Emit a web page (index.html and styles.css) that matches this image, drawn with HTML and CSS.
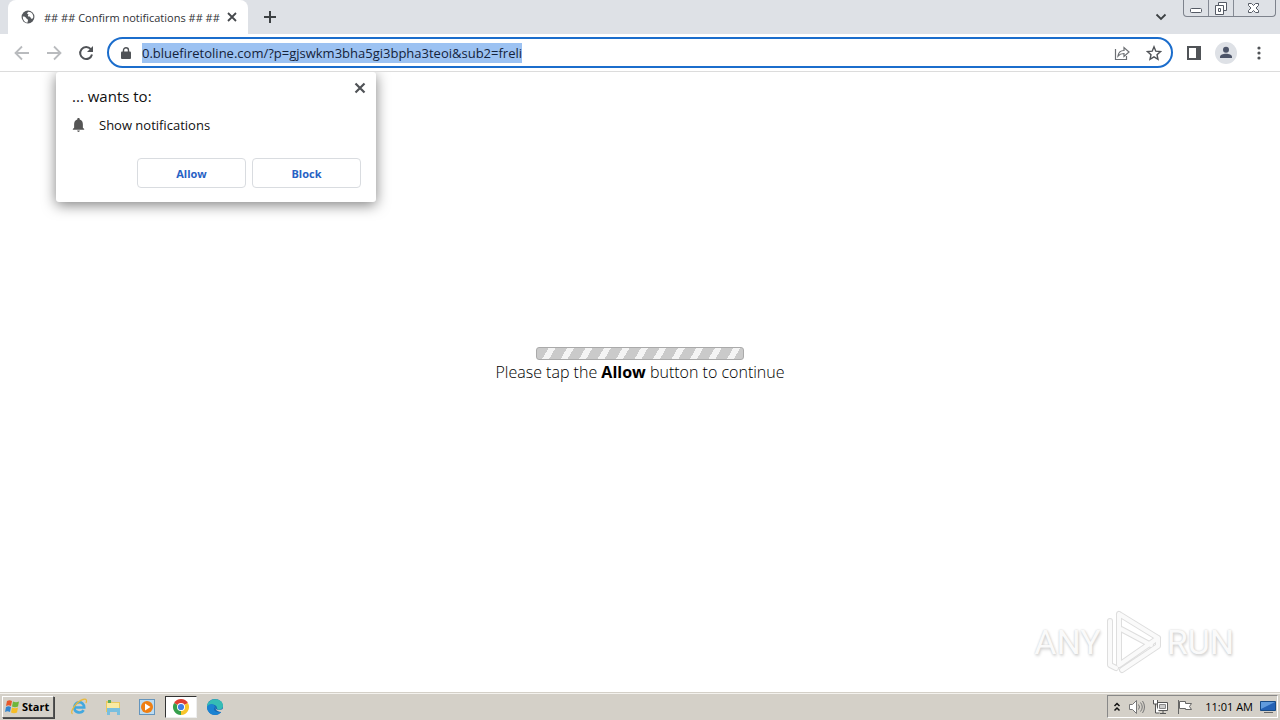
FILE: index.html
```html
<!DOCTYPE html>
<html lang="en">
<head>
<meta charset="utf-8">
<title>Confirm notifications</title>
<link rel="stylesheet" href="styles.css">
</head>
<body>
<header class="tabstrip">
  <div class="tab">
    <svg class="favicon" viewBox="0 0 24 24"><circle cx="12" cy="12" r="11" fill="#55585c"/><path d="M3 11c4 0 5 1 6 3s3 1 3 3-1 3-1 5C6 21 3 17 3 11zM13 3c-3 2-3 4-1 4s-2 4 1 4 3 1 4 3 3 1 4-1C22 8 18 3 13 3z" fill="#fff"/></svg>
    <span class="tab-title">## ## Confirm notifications ## ##</span>
    <button class="bare tab-close" aria-label="Close tab"><svg width="10" height="10" viewBox="0 0 10 10"><path d="M1 1l8 8M9 1L1 9" stroke="#45484c" stroke-width="1.8"/></svg></button>
  </div>
  <button class="bare new-tab" aria-label="New tab"><svg width="14" height="14" viewBox="0 0 14 14"><path d="M7 1v12M1 7h12" stroke="#3c4043" stroke-width="2"/></svg></button>
  <button class="bare tab-search" aria-label="Search tabs"><svg width="12" height="8" viewBox="0 0 12 8"><path d="M1.500 1.500L6 6l4.500-4.500" fill="none" stroke="#3c4043" stroke-width="1.800"/></svg></button>
  <div class="window-controls">
    <button class="bare" aria-label="Minimize"><svg width="24" height="16" viewBox="0 0 24 16"><rect x="6.500" y="8.500" width="11" height="4" rx="1" fill="#fff" stroke="#555a65"/></svg></button>
    <button class="bare" aria-label="Restore"><svg width="24" height="16" viewBox="0 0 24 16"><path d="M9.500 2.500h8v8h-8z" fill="#fff" stroke="#555a65"/><path d="M6.500 5.500h8v9h-8z" fill="#fff" stroke="#555a65"/><path d="M9.500 8.500h2v3h-2z" fill="none" stroke="#555a65"/></svg></button>
    <button class="bare close" aria-label="Close"><svg width="41" height="16" viewBox="0 0 41 16"><path d="M14.500 3.500h3l2 2 2-2h3v2L22 8l2.500 2.500v2h-3l-2-2-2 2h-3v-2L17 8l-2.500-2.500z" fill="#fff" stroke="#555a65"/></svg></button>
  </div>
</header>

<nav class="toolbar" aria-label="Browser toolbar">
  <div class="nav-buttons">
    <button class="bare" aria-label="Back"><svg width="16" height="16" viewBox="0 0 16 16"><path d="M15 8H2M8 1.500L1.500 8 8 14.500" fill="none" stroke="#b9bbbe" stroke-width="1.800"/></svg></button>
    <button class="bare" aria-label="Forward"><svg width="16" height="16" viewBox="0 0 16 16"><path d="M1 8h13M8 1.500L14.500 8 8 14.500" fill="none" stroke="#b9bbbe" stroke-width="1.800"/></svg></button>
    <button class="bare" aria-label="Reload"><svg width="16" height="16" viewBox="0 0 16 16"><path d="M12.800 4.200A6 6 0 1 0 14 9.500" fill="none" stroke="#505357" stroke-width="2"/><path d="M15 1v6H9z" fill="#505357"/></svg></button>
  </div>
  <div class="omnibox">
    <svg width="10" height="12" viewBox="0 0 10 12"><path d="M2.500 5V3.200a2.500 2.500 0 0 1 5 0V5" fill="none" stroke="#505357" stroke-width="1.400"/><rect y="4.500" width="10" height="7.500" rx="1" fill="#505357"/></svg>
    <input class="url" type="text" aria-label="Address" value="0.bluefiretoline.com/?p=gjswkm3bha5gi3bpha3teoi&amp;sub2=freli">
    <button class="bare share" aria-label="Share"><svg width="16" height="16" viewBox="0 0 16 16"><path d="M1.500 4v10.500h11V11M4 11c.5-4 2.500-5.500 6-5.500V2.500L15 7l-5 4.500v-3c-3 0-4.500.7-6 2.500z" fill="none" stroke="#6c6f73" stroke-width="1.200"/></svg></button>
    <button class="bare" aria-label="Bookmark"><svg width="16" height="16" viewBox="0 0 16 16"><path d="M8 1.800l1.800 4.400 4.700.4L11 9.700l1 4.600-4-2.500-4 2.500 1-4.600-3.500-3.100 4.700-.4z" fill="none" stroke="#505357" stroke-width="1.400"/></svg></button>
  </div>
  <div class="toolbar-end">
    <button class="bare" aria-label="Side panel"><svg width="14" height="14" viewBox="0 0 14 14"><rect x="1" y="1" width="12" height="12" fill="none" stroke="#505357" stroke-width="2"/><path d="M9 1h4v12H9z" fill="#505357"/></svg></button>
    <button class="bare" aria-label="Profile"><svg width="22" height="22" viewBox="0 0 22 22"><circle cx="11" cy="11" r="11" fill="#dee1e6"/><circle cx="11" cy="7.800" r="3" fill="#4c5468"/><path d="M5 16v-1c0-2 3-3.200 6-3.200s6 1.200 6 3.200v1z" fill="#4c5468"/></svg></button>
    <button class="bare" aria-label="Menu"><svg width="4" height="14" viewBox="0 0 4 14" fill="#505357"><circle cx="2" cy="2" r="1.600"/><circle cx="2" cy="7" r="1.600"/><circle cx="2" cy="12" r="1.600"/></svg></button>
  </div>
</nav>

<main class="page">
  <section class="prompt" role="dialog" aria-labelledby="prompt-title">
    <button class="bare prompt-close" aria-label="Dismiss"><svg width="12" height="12" viewBox="0 0 12 12"><path d="M1.500 1.500l9 9M10.500 1.500l-9 9" stroke="#505357" stroke-width="2.200"/></svg></button>
    <h1 class="prompt-title" id="prompt-title">... wants to:</h1>
    <p class="permission"><svg width="13" height="14" viewBox="0 0 14 16"><path d="M7 0c1 0 1.400.6 1.400 1.600C11 2.200 12 4.500 12 7v4l1.500 1.500v1H.5v-1L2 11V7c0-2.500 1-4.800 3.600-5.400C5.600.6 6 0 7 0zM5.500 14.300h3c0 1-.7 1.600-1.500 1.600s-1.500-.6-1.500-1.600z" fill="#555"/></svg>Show notifications</p>
    <div class="prompt-actions"><button class="action">Allow</button><button class="action">Block</button></div>
  </section>

  <div class="loading">
    <div class="stripes"></div>
    <p class="message">Please tap the <b>Allow</b> button to continue</p>
  </div>

  <div class="watermark">
    <span>ANY</span>
    <svg width="58" height="66" viewBox="0 0 58 66" fill="none" stroke-linejoin="round" stroke-linecap="round"><path d="M5 12v44l6 3M14 5v51M14 5l39 24-39 27M16 20l30 16M17 61l36-24V29" stroke="#dedede" stroke-width="6"/><path d="M5 12v44l6 3M14 5v51M14 5l39 24-39 27M16 20l30 16M17 61l36-24V29" stroke="#fafafa" stroke-width="4"/></svg>
    <span>RUN</span>
  </div>
</main>

<footer class="taskbar">
  <button class="start"><svg width="17" height="16" viewBox="0 0 17 16"><path d="M3 2c2-1 3-1 5 0L7 7C5 6 4 6 2 7z" fill="#e7582b"/><path d="M9 2.500c2 1 4 1 6 0l-1 5c-2 1-4 1-6 0z" fill="#6fb63c"/><path d="M2 8c2-1 3-1 5 0l-1 5c-2-1-3-1-5 0z" fill="#3285d0"/><path d="M8 8.500c2 1 4 1 6 0l-1 5c-2 1-4 1-6 0z" fill="#f6bd27"/></svg>Start</button>
  <div class="apps">
    <button class="bare app" aria-label="Internet Explorer"><svg width="18" height="18" viewBox="0 0 18 18" fill="none"><path d="M4.500 9.500h9.700C14 2 4 3 4.300 10c.2 5 7.200 6 9.300 2.200" stroke="#42a8df" stroke-width="2.600"/><path d="M2.500 16C-1 14 7 3 13 1.500c4-1 4 1 3 3.500" stroke="#e8b93d" stroke-width="1.300"/></svg></button>
    <button class="bare app" aria-label="File Explorer"><svg width="18" height="18" viewBox="0 0 18 18"><path d="M2 3h5l1 1h8v10H2z" fill="#e9c95f"/><path d="M3 5h12v8H3z" fill="#f9eaa3"/><path d="M4 2h3v3H4z" fill="#5cab5c"/><path d="M3 10h13v7h-3v-3H6v3H3z" fill="#79bfdf"/></svg></button>
    <button class="bare app" aria-label="Media Player"><svg width="18" height="18" viewBox="0 0 18 18"><rect x="1.500" y="1.500" width="15" height="15" fill="#bcdcf2" stroke="#6495bd"/><circle cx="9" cy="9" r="6" fill="#ef7f13"/><path d="M7 5.500v7L12.500 9z" fill="#fff"/></svg></button>
    <button class="bare app active" aria-label="Chrome"><svg width="18" height="18" viewBox="0 0 18 18"><path d="M9 9L2.070 5A8 8 0 0 1 15.930 5z" fill="#df3f32"/><path d="M9 9l6.930-4A8 8 0 0 1 9 17z" fill="#f8c52a"/><path d="M9 9v8A8 8 0 0 1 2.070 5z" fill="#369f4c"/><circle cx="9" cy="9" r="4" fill="#fff"/><circle cx="9" cy="9" r="3.100" fill="#3f7ee5"/></svg></button>
    <button class="bare app" aria-label="Edge"><svg width="18" height="18" viewBox="0 0 18 18"><circle cx="9" cy="9" r="8" fill="#1769b5"/><path d="M1 9C1-1 17-1 17 8c0 4-6 5-6 2 0-4-7-5-10-1z" fill="#35bcb5"/><path d="M1 9c2-4 7-4 8 0-3 2 0 6 6 5-5 6-14 2-14-5z" fill="#1b83d2"/><path d="M9.500 9c-.5 3 3.500 4 7.500 2v3c-5 0-8-2-7.500-5z" fill="#d4d0c8"/></svg></button>
  </div>
  <div class="tray">
    <svg width="8" height="12" viewBox="0 0 8 12"><path d="M1.500 5L4 2.500 6.500 5M1.500 9.500L4 7l2.500 2.500" fill="none" stroke="#111" stroke-width="1.500"/></svg>
    <svg width="17" height="16" viewBox="0 0 17 16" fill="none" stroke="#777"><path d="M1.500 5.500h3l4-4v13l-4-4h-3z" fill="#fff"/><path d="M10.500 5.500q2 2.500 0 5M12.500 3.500q3.500 4.500 0 9M14.500 2q4 6 0 12"/></svg>
    <svg width="17" height="16" viewBox="0 0 17 16" fill="#fff" stroke="#555"><path d="M5.500 3.500h10v8h-10z"/><path d="M7.500 5.500h6v4h-6z" fill="#ccc" stroke="#888"/><path d="M8 14.500h6M11 11v3M1.500 1v4h4V1M3.500 5v9h4"/></svg>
    <svg width="17" height="16" viewBox="0 0 17 16" fill="#fff" stroke="#666"><path d="M2.500 1v14"/><path d="M3.500 2.500h6v2h6l-2 3 2 3h-6v-1h-6z"/></svg>
    <time class="clock">11:01 AM</time>
    <svg width="16" height="14" viewBox="0 0 16 14"><path d="M.5 1.500h15v9H.5z" fill="#2462b5" stroke="#174b86"/><path d="M1 2h14L1 9z" fill="#609bdd"/><path d="M4 12h9v1H4z" fill="#666"/></svg>
  </div>
</footer>
</body>
</html>
```
FILE: styles.css
```css
* { box-sizing: border-box; }
body {
  margin: 0;
  min-height: 100vh;
  display: flex;
  flex-direction: column;
  background: #fff;
  color: #111;
  font-family: "Open Sans", "Noto Sans", sans-serif;
  font-size: 13px;
}
h1, p { margin: 0; }
svg { display: block; flex: none; }
.bare { display: flex; align-items: center; justify-content: center; padding: 0; border: 0; background: none; }

.tabstrip { display: flex; align-items: center; height: 34px; padding-left: 8px; background: #dee1e6; }
.tab { display: flex; align-items: center; height: 34px; width: 240px; padding: 0 11px 0 13px; background: #fff; border-radius: 8px 8px 0 0; }
.favicon { width: 14px; height: 14px; margin-right: 9px; }
.tab-title { flex: 1; font-size: 11px; color: #303236; white-space: nowrap; }
.new-tab { margin-left: 15px; }
.tab-search { margin-left: auto; }
.window-controls { display: flex; align-self: flex-start; margin: 0 4px 0 16px; border: 1px solid #7d828c; border-top: 0; border-radius: 0 0 4px 4px; }
.window-controls .bare + .bare { border-left: 1px solid #858a94; }

.toolbar { display: flex; align-items: center; height: 38px; padding: 0 19px 0 14px; border-bottom: 1px solid #dcdcdc; }
.nav-buttons { display: flex; gap: 16px; margin-right: 13px; }
.omnibox { flex: 1; min-width: 0; display: flex; align-items: center; height: 31px; padding: 0 9px 0 12px; border: 2px solid #1b6dcc; border-radius: 16px; }
.url { field-sizing: content; height: 20px; margin-left: 11px; padding: 0; border: 0; outline: 0; background: #9cc2f2; color: #14233b; font: 13px/20px "Open Sans", sans-serif; }
.share { margin: 0 16px 0 auto; }
.toolbar-end { display: flex; align-items: center; gap: 14px; margin-left: 14px; }
.toolbar-end .bare:last-child { margin-left: 6px; }

.page { position: relative; flex: 1; display: flex; flex-direction: column; align-items: center; justify-content: center; padding-bottom: 34px; }
.prompt { position: absolute; top: 0; left: 56px; width: 320px; padding: 14px 15px 14px 16px; background: #fff; border-radius: 3px; box-shadow: 0 3px 14px rgba(0, 0, 0, .5); clip-path: inset(0 -24px -24px -24px); }
.prompt-close { position: absolute; top: 10px; right: 10px; }
.prompt-title { font-size: 15px; line-height: 20px; font-weight: 400; }
.permission { display: flex; align-items: center; gap: 14px; margin-top: 9px; font-size: 13px; line-height: 20px; }
.prompt-actions { display: flex; justify-content: flex-end; gap: 6px; margin-top: 23px; }
.action { width: 109px; height: 30px; padding: 0; border: 1px solid #d9dce0; border-radius: 4px; background: #fff; color: #2862c4; font: bold 11px "Open Sans", sans-serif; }

.loading { display: flex; flex-direction: column; align-items: center; }
.stripes { width: 208px; height: 13px; border: 1px solid #aaa; border-radius: 3px; background: repeating-linear-gradient(120deg, #cacaca 0 10px, #f4f4f4 10px 16px); }
.message { font-size: 16px; line-height: 24px; font-weight: 300; color: #000; }
.message b { font-weight: 700; }
.watermark { position: absolute; right: 46px; bottom: 18px; display: flex; align-items: center; gap: 4px; color: #fafafa; font: 34px/66px Roboto, sans-serif; text-shadow: 0 0 2px #ccc, 1px 2px 3px #d4d4d4; }

.taskbar { display: flex; align-items: center; height: 27px; padding: 0 2px; background: #d4d0c8; box-shadow: inset 0 1px #f4f2ee, 0 -1px #d4d0c8; }
.start { display: flex; align-items: center; gap: 1px; width: 52px; height: 22px; padding: 0 1px; border: 1px solid; border-color: #fff #555 #555 #fff; background: #d4d0c8; color: #000; font: bold 11px "Open Sans", sans-serif; box-shadow: 1px 1px #444; }
.apps { display: flex; gap: 2px; margin-left: 9px; }
.app { width: 32px; height: 22px; }
.active { background: #fff; border: 1px solid; border-color: #333 #eee #eee #333; }
.tray { display: flex; align-items: center; gap: 7px; height: 23px; margin-left: auto; padding: 0 1px 0 5px; border: 1px solid; border-color: #888 #fff #fff #888; }
.clock { margin-left: 5px; font-size: 11px; color: #000; white-space: nowrap; }
```
